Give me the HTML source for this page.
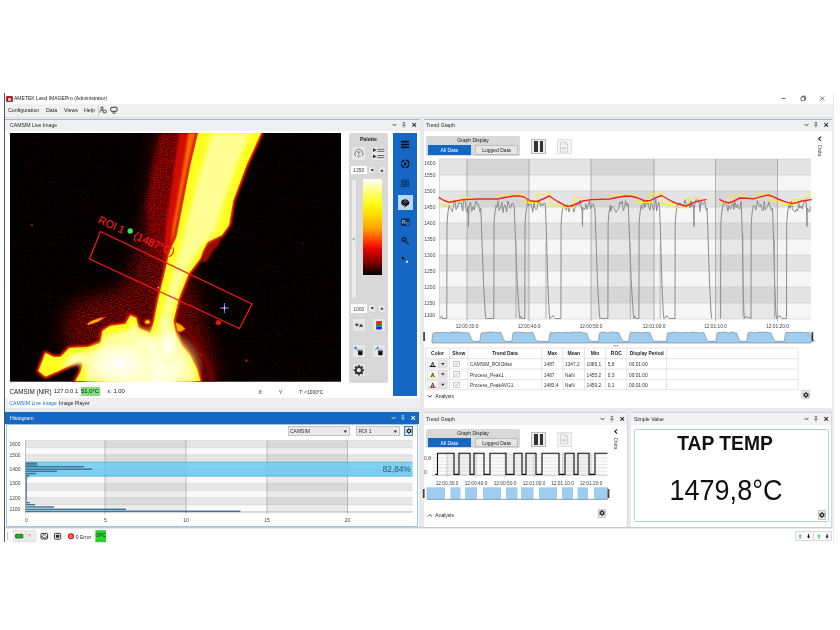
<!DOCTYPE html><html lang="en"><head><meta charset="utf-8"><title>AMETEK Land IMAGEPro (Administrator)</title><style>
html,body{margin:0;padding:0;background:#fff;}
body{width:840px;height:630px;position:relative;overflow:hidden;font-family:"Liberation Sans",sans-serif;}
div,span.t,svg{position:absolute;box-sizing:border-box;}
span.t{white-space:nowrap;}
.btn{background:#e7e7e7;border:0.5px solid #d6d6d6;}
</style></head><body><div id="root" style="left:0;top:0;width:840px;height:630px;will-change:transform;">
<div style="left:4px;top:93px;width:829.5px;height:449.3px;background:#e9e9eb;"></div>
<div style="left:4px;top:93px;width:0.8px;height:449.3px;background:#555;"></div>
<div style="left:4.8px;top:93px;width:828px;height:11px;background:#fff;"></div>
<div style="left:4.8px;top:104px;width:828px;height:12.5px;background:#f0f0f0;"></div>
<div style="left:4.8px;top:116.5px;width:828px;height:1px;background:#dcdcdc;"></div>
<div style="left:6px;top:95.5px;width:6.5px;height:6.5px;background:#a8232b;border-radius:1.2px;"></div>
<div style="left:7.5px;top:98px;width:3.5px;height:2.5px;background:#e9b9bb;border-radius:0.5px;"></div>
<span class="t" style="top:95.34px;font-size:5.6px;line-height:6.72px;color:#222;left:14.3px;transform:scaleX(0.9);transform-origin:left center;">AMETEK Land IMAGEPro (Administrator)</span>
<svg style="left:775px;top:93px;width:58px;height:11px" viewBox="775 93 58 11"><g stroke="#333" stroke-width="0.7" fill="none"><path d="M781.5 98.5h4"/><rect x="801" y="97" width="3.6" height="3.6" rx="0.6"/><path d="M802 97v-0.8h3.6v3.6h-0.9"/><path d="M820.3 96.5l4 4M824.3 96.5l-4 4"/></g></svg>
<span class="t" style="top:106.94px;font-size:5.6px;line-height:6.72px;color:#222;left:8px;transform:scaleX(0.94);transform-origin:left center;">Configuration</span>
<span class="t" style="top:106.94px;font-size:5.6px;line-height:6.72px;color:#222;left:46.2px;transform:scaleX(0.94);transform-origin:left center;">Data</span>
<span class="t" style="top:106.94px;font-size:5.6px;line-height:6.72px;color:#222;left:63.8px;transform:scaleX(0.94);transform-origin:left center;">Views</span>
<span class="t" style="top:106.94px;font-size:5.6px;line-height:6.72px;color:#222;left:83.8px;transform:scaleX(0.94);transform-origin:left center;">Help</span>
<div style="left:98px;top:104.5px;width:0.6px;height:11.5px;background:#d2d2d2;"></div>
<svg style="left:99px;top:105px;width:20px;height:11px" viewBox="99 105 20 11"><g stroke="#222" stroke-width="0.7" fill="none"><circle cx="102" cy="108.2" r="1.3"/><path d="M100 112.5v-1.2q0-1.2 2-1.2q1 0 1.5 0.5"/><rect x="103.2" y="110.2" width="3" height="2.6" rx="0.4"/><rect x="110.8" y="107.3" width="6.2" height="4" rx="0.6" stroke-width="0.9"/><path d="M112.3 113h3.2" stroke-width="0.9"/></g></svg>
<div style="left:5px;top:119px;width:414.5px;height:289px;background:#fff;"></div><div style="left:5px;top:118.5px;width:414.5px;height:1.2px;background:#9db9d6;"></div><div style="left:5px;top:119.7px;width:414.5px;height:11px;background:#f0f0f2;"></div><span class="t" style="top:121.82px;font-size:5.3px;line-height:6.36px;color:#222;left:9.5px;transform:scaleX(0.97);transform-origin:left center;">CAMSIM Live Image</span><svg style="left:389.5px;top:119px;width:30px;height:12px" viewBox="0 0 30 12"><g stroke="#222" fill="none"><path d="M2.6 4.9l1.9 1.9l1.9 -1.9" stroke-width="0.85"/><path d="M12.7 3.4h2.4M13.2 3.4v3M14.6 3.4v3M12.1 6.5h3.6M13.9 6.5v2.3" stroke-width="0.6" opacity="0.7"/><path d="M22.4 4l3.6 3.6M26 4l-3.6 3.6" stroke-width="1.05"/></g></svg>
<div style="left:423.5px;top:119px;width:408.5px;height:289px;background:#fff;"></div><div style="left:423.5px;top:118.5px;width:408.5px;height:1.2px;background:#9db9d6;"></div><div style="left:423.5px;top:119.7px;width:408.5px;height:11px;background:#f0f0f2;"></div><span class="t" style="top:121.82px;font-size:5.3px;line-height:6.36px;color:#222;left:425.7px;transform:scaleX(0.97);transform-origin:left center;">Trend Graph</span><svg style="left:802px;top:119px;width:30px;height:12px" viewBox="0 0 30 12"><g stroke="#222" fill="none"><path d="M2.6 4.9l1.9 1.9l1.9 -1.9" stroke-width="0.85"/><path d="M12.7 3.4h2.4M13.2 3.4v3M14.6 3.4v3M12.1 6.5h3.6M13.9 6.5v2.3" stroke-width="0.6" opacity="0.7"/><path d="M22.4 4l3.6 3.6M26 4l-3.6 3.6" stroke-width="1.05"/></g></svg>
<div style="left:5px;top:412.3px;width:414px;height:115px;background:#fff;"></div><div style="left:5px;top:412.3px;width:414px;height:11.5px;background:#1268c3;"></div><span class="t" style="top:415.12px;font-size:5.3px;line-height:6.36px;color:#fff;left:9.8px;transform:scaleX(0.97);transform-origin:left center;">Histogram</span><svg style="left:389px;top:412.3px;width:30px;height:12px" viewBox="0 0 30 12"><g stroke="#fff" fill="none"><path d="M2.6 4.9l1.9 1.9l1.9 -1.9" stroke-width="0.85"/><path d="M12.7 3.4h2.4M13.2 3.4v3M14.6 3.4v3M12.1 6.5h3.6M13.9 6.5v2.3" stroke-width="0.6" opacity="0.7"/><path d="M22.4 4l3.6 3.6M26 4l-3.6 3.6" stroke-width="1.05"/></g></svg>
<div style="left:423.5px;top:413.3px;width:204px;height:114.2px;background:#fff;"></div><div style="left:423.5px;top:412.3px;width:204px;height:12.5px;background:#f2f2f3;border-top:0.6px solid #d4d4d4;"></div><div style="left:626.9px;top:412.3px;width:0.6px;height:115.2px;background:#d9d9d9;"></div><span class="t" style="top:416.12px;font-size:5.3px;line-height:6.36px;color:#222;left:425.7px;transform:scaleX(0.97);transform-origin:left center;">Trend Graph</span><svg style="left:597.5px;top:413.3px;width:30px;height:12px" viewBox="0 0 30 12"><g stroke="#222" fill="none"><path d="M2.6 4.9l1.9 1.9l1.9 -1.9" stroke-width="0.85"/><path d="M12.7 3.4h2.4M13.2 3.4v3M14.6 3.4v3M12.1 6.5h3.6M13.9 6.5v2.3" stroke-width="0.6" opacity="0.7"/><path d="M22.4 4l3.6 3.6M26 4l-3.6 3.6" stroke-width="1.05"/></g></svg>
<div style="left:631px;top:413.3px;width:201px;height:114.2px;background:#fff;"></div><div style="left:631px;top:412.3px;width:201px;height:12.5px;background:#f2f2f3;border-top:0.6px solid #d4d4d4;"></div><div style="left:831.4px;top:412.3px;width:0.6px;height:115.2px;background:#d9d9d9;"></div><span class="t" style="top:416.12px;font-size:5.3px;line-height:6.36px;color:#222;left:633.6px;transform:scaleX(0.97);transform-origin:left center;">Simple Value</span><svg style="left:802px;top:413.3px;width:30px;height:12px" viewBox="0 0 30 12"><g stroke="#222" fill="none"><path d="M2.6 4.9l1.9 1.9l1.9 -1.9" stroke-width="0.85"/><path d="M12.7 3.4h2.4M13.2 3.4v3M14.6 3.4v3M12.1 6.5h3.6M13.9 6.5v2.3" stroke-width="0.6" opacity="0.7"/><path d="M22.4 4l3.6 3.6M26 4l-3.6 3.6" stroke-width="1.05"/></g></svg>
<div style="left:5px;top:527.3px;width:827px;height:0.8px;background:#c9c9c9;"></div>
<div style="left:4.8px;top:529.3px;width:828.7px;height:13px;background:#fff;"></div>
<svg style="left:9.5px;top:133px;width:331.3px;height:248.7px" viewBox="9.5 133 331.3 248.7" preserveAspectRatio="none"><defs>
<filter id="b1" x="-20%" y="-20%" width="140%" height="140%"><feGaussianBlur stdDeviation="1"/></filter>
<filter id="b2" x="-20%" y="-20%" width="140%" height="140%"><feGaussianBlur stdDeviation="2.2"/></filter>
<filter id="b4" x="-30%" y="-30%" width="160%" height="160%"><feGaussianBlur stdDeviation="5"/></filter>
<filter id="b8" x="-30%" y="-30%" width="160%" height="160%"><feGaussianBlur stdDeviation="9"/></filter>
<filter id="nz" x="-30%" y="-30%" width="160%" height="160%">
 <feTurbulence type="fractalNoise" baseFrequency="0.9" numOctaves="2" seed="3" result="n"/>
 <feColorMatrix in="n" type="matrix" values="0 0 0 0 0  0 0 0 0 0  0 0 0 0 0  2.6 0 0 0 -0.95" result="m"/>
 <feComposite in="SourceGraphic" in2="m" operator="in"/>
</filter>
<filter id="nz3" x="-30%" y="-30%" width="160%" height="160%">
 <feTurbulence type="fractalNoise" baseFrequency="0.85" numOctaves="2" seed="23" result="n"/>
 <feColorMatrix in="n" type="matrix" values="0 0 0 0 0  0 0 0 0 0  0 0 0 0 0  3 0 0 0 -1.2" result="m"/>
 <feComposite in="SourceGraphic" in2="m" operator="in"/>
</filter>
<filter id="hz" x="-40%" y="-20%" width="180%" height="140%">
 <feGaussianBlur in="SourceGraphic" stdDeviation="9" result="b"/>
 <feTurbulence type="fractalNoise" baseFrequency="0.9" numOctaves="2" seed="3" result="n"/>
 <feColorMatrix in="n" type="matrix" values="0 0 0 0 0  0 0 0 0 0  0 0 0 0 0  2.6 0 0 0 -0.95" result="m"/>
 <feComposite in="b" in2="m" operator="in"/>
</filter>
<filter id="hz3" x="-40%" y="-20%" width="180%" height="140%">
 <feGaussianBlur in="SourceGraphic" stdDeviation="2.2" result="b"/>
 <feTurbulence type="fractalNoise" baseFrequency="0.85" numOctaves="2" seed="23" result="n"/>
 <feColorMatrix in="n" type="matrix" values="0 0 0 0 0  0 0 0 0 0  0 0 0 0 0  3 0 0 0 -1.2" result="m"/>
 <feComposite in="b" in2="m" operator="in"/>
</filter>
<filter id="nz2" x="0" y="0" width="100%" height="100%">
 <feTurbulence type="fractalNoise" baseFrequency="0.8" numOctaves="2" seed="11" result="n"/>
 <feColorMatrix in="n" type="matrix" values="0 0 0 0 0  0 0 0 0 0  0 0 0 0 0  3 0 0 0 -1.45" result="m"/>
 <feComposite in="SourceGraphic" in2="m" operator="in"/>
</filter>
<radialGradient id="hot" cx="0.5" cy="0.5" r="0.5"><stop offset="0" stop-color="#fff"/><stop offset="0.55" stop-color="#ffffd0"/><stop offset="1" stop-color="#ffff60" stop-opacity="0"/></radialGradient>
<linearGradient id="halo" x1="0" y1="0" x2="1" y2="0"><stop offset="0" stop-color="#7a0000"/><stop offset="0.55" stop-color="#d81000"/><stop offset="1" stop-color="#ff7a00"/></linearGradient>
</defs><rect x="9.5" y="133" width="331.3" height="248.7" fill="#000"/><rect x="9.5" y="133" width="331.3" height="248.7" fill="#700000" filter="url(#nz2)" opacity="0.3"/><path d="M158 133 L200 133 L180 250 L196 300 L218 381 L100 381 L62 340 L70 305 L125 288 L142 240 L150 190Z" fill="#8a0000" filter="url(#b8)" opacity="0.28"/><path d="M158 133 L200 133 L180 250 L196 300 L218 381 L100 381 L62 340 L70 305 L125 288 L142 240 L150 190Z" fill="#c00000" filter="url(#hz)" opacity="0.9"/><path d="M176 300 L185 318 L200 340 L212 365 L216 381 L196 381 L186 350 L172 325Z" fill="#600000" filter="url(#b2)" opacity="0.8"/><path d="M160 133 L199 133 L190 165 L183 201 L176 237 L169 254 L163 270 L160 262 L150 246 L146 205 L153 165Z" fill="#520000" filter="url(#b2)"/><path d="M160 133 L199 133 L190 165 L183 201 L176 237 L169 254 L163 270 L160 262 L150 246 L146 205 L153 165Z" fill="#b80000" filter="url(#hz3)"/><path d="M179 133 L199 133 L190 165 L183 201 L176 237 L169 254 L164 262 L165 228 L169 200 L174 165Z" fill="#d01000" filter="url(#b1)"/><path d="M188 133 L199 133 L190 165 L183 201 L176 237 L170 252 L172 228 L177 200 L183 165Z" fill="#ff6a00" filter="url(#b1)"/><path d="M221 236 L207 243 L203 252 L202 262 L206 262 L212 252 L219 244Z" fill="#980800" filter="url(#b1)"/><path d="M197.6 133 L260.6 133 L246 165 L232.6 201 L228.5 225 L221.4 235 L207 242 L202.4 251 L200 258 L194 266 L188 274 L178.5 298 L173 321 L175.5 335 L181 345 L189.5 355 L196.5 369 L200 381 L75 381 L80 372 L83 361 L76 362 L60 370 L45 376.5 L38 371 L45 353 L53 357 L60 357 L69 348 L88 347 L100 343 L102 331 L109.5 326 L125 324 L129.8 315.5 L135.7 318 L138 328 L150 333 L153.5 321 L158 298 L164 274 L169 252 L176 237 L183 201 L190 165Z" fill="#e01000" stroke="#b00000" stroke-width="5" stroke-linejoin="round" filter="url(#b1)"/><path d="M197.6 133 L260.6 133 L246 165 L232.6 201 L228.5 225 L221.4 235 L207 242 L202.4 251 L200 258 L194 266 L188 274 L178.5 298 L173 321 L175.5 335 L181 345 L189.5 355 L196.5 369 L200 381 L75 381 L80 372 L83 361 L76 362 L60 370 L45 376.5 L38 371 L45 353 L53 357 L60 357 L69 348 L88 347 L100 343 L102 331 L109.5 326 L125 324 L129.8 315.5 L135.7 318 L138 328 L150 333 L153.5 321 L158 298 L164 274 L169 252 L176 237 L183 201 L190 165Z" fill="#ff9000" stroke="#ff5000" stroke-width="2" stroke-linejoin="round" filter="url(#b1)"/><path d="M197.6 133 L260.6 133 L246 165 L232.6 201 L228.5 225 L221.4 235 L207 242 L202.4 251 L200 258 L194 266 L188 274 L178.5 298 L173 321 L175.5 335 L181 345 L189.5 355 L196.5 369 L200 381 L75 381 L80 372 L83 361 L76 362 L60 370 L45 376.5 L38 371 L45 353 L53 357 L60 357 L69 348 L88 347 L100 343 L102 331 L109.5 326 L125 324 L129.8 315.5 L135.7 318 L138 328 L150 333 L153.5 321 L158 298 L164 274 L169 252 L176 237 L183 201 L190 165Z" fill="#ffff20"/><path d="M212 133 L250 133 L236 165 L224 201 L214 232 L198 250 L186 270 L176 298 L168 322 L160 322 L166 296 L174 268 L182 240 L192 201 L202 165Z" fill="#ffffa0" filter="url(#b2)" opacity="0.9"/><path d="M60 366 L72 354 L96 352 L106 336 L128 331 L134 324 L142 334 L156 338 L160 318 L170 318 L174 338 L184 352 L192 368 L195 381 L84 381 L88 366 L80 364Z" fill="#ffffb0" filter="url(#b2)"/><ellipse cx="146" cy="366" rx="58" ry="42" fill="url(#hot)"/><ellipse cx="118" cy="364" rx="42" ry="28" fill="url(#hot)" opacity="0.9"/><ellipse cx="168" cy="345" rx="14" ry="22" fill="url(#hot)" opacity="0.8"/><path d="M86 324 Q94 318 105 317 Q98 323 88 325Z" fill="#ffc000" stroke="#d02000" stroke-width="1"/><ellipse cx="147" cy="322" rx="3.2" ry="2.6" fill="#ffe000" stroke="#c01000" stroke-width="1.6"/><path d="M175 322 L181 325 L185 329 L180 332 L176 331Z" fill="#ffb000" stroke="#e03000" stroke-width="1"/><circle cx="218" cy="322.5" r="2.6" fill="#e81800"/><circle cx="157.6" cy="287.5" r="1" fill="#ff9000"/><circle cx="31.5" cy="225" r="0.9" fill="#e01000"/><circle cx="246" cy="360.5" r="1.2" fill="#c01000"/><circle cx="201" cy="355" r="1.3" fill="#b01000"/><circle cx="303" cy="243" r="0.7" fill="#900000"/><path d="M187 332 Q204 350 213 381" fill="none" stroke="#a00000" stroke-width="1.6" filter="url(#b1)" opacity="0.8"/><path d="M100 231.5 L251.5 304 L239 328.5 L89 259Z" fill="none" stroke="#ff1616" stroke-width="1.25"/><g transform="translate(97.2 222.6) rotate(24)" font-family="Liberation Sans, sans-serif" font-size="10.6" fill="#ff1a1a" stroke="#ff1a1a" stroke-width="0.25"><text x="0" y="0">ROI 1</text><text x="38.6" y="0" font-size="10.9">(1487°C)</text></g><circle cx="129.7" cy="231" r="2.7" fill="#3fe060"/><path d="M163 257v14" stroke="#e06080" stroke-width="0.5" stroke-dasharray="1 1" opacity="0.7"/><path d="M219.5 308h9M224 303v10" stroke="#5f7cf0" stroke-width="1.1"/><path d="M222 308h4M224 306v4" stroke="#d8e0ff" stroke-width="0.6"/></svg>
<div style="left:348.6px;top:133.3px;width:39.8px;height:250px;background:#d8d8d8;border-radius:2px;"></div>
<span class="t" style="top:135.68px;font-size:5.2px;line-height:6.24px;color:#222;font-weight:700;left:368.4px;transform:translateX(-50%);transform-origin:center center;">Palette</span>
<div class="btn" style="left:351.4px;top:145.9px;width:14.8px;height:14.7px;"></div>
<div class="btn" style="left:371.4px;top:145.9px;width:14.9px;height:14.7px;"></div>
<svg style="left:351px;top:146px;width:36px;height:15px" viewBox="351 146 36 15"><g stroke="#505050" stroke-width="0.75" fill="none"><path d="M356.2 155.6a1.9 1.9 0 0 1 -0.2-3.7a2.1 2.1 0 0 1 1.6-2.2a2.3 2.3 0 0 1 3.2 0.3a2.1 2.1 0 0 1 1.4 2.2a1.8 1.8 0 0 1 -0.6 3.4"/><path d="M358.8 151.2v4.6M357.3 153l1.5-1.5l1.5 1.5" stroke-width="0.55"/><path d="M357 156.4q1.8 0.8 3.6 0" stroke-width="0.5"/></g><g fill="#333"><path d="M373 148.3l3.8 1.8l-3.8 1.8zM373 154.6l3.8 1.8l-3.8 1.8z"/></g><g fill="#555"><rect x="377.4" y="148.75" width="6.9" height="0.9"/><rect x="377.4" y="150.85" width="6.9" height="0.9"/><rect x="377.4" y="155.15" width="6.9" height="0.9"/><rect x="377.4" y="157.25" width="6.9" height="0.9"/></g></svg>
<div style="left:350.7px;top:165.7px;width:16.4px;height:8.6px;background:#fff;"></div><span class="t" style="top:167.2px;font-size:5px;line-height:6px;color:#444;left:353.2px;">1350</span><div class="btn" style="left:368.3px;top:165.7px;width:7.8px;height:8.6px;"></div><div class="btn" style="left:377.9px;top:165.7px;width:8.1px;height:8.6px;"></div><svg style="left:368px;top:165.7px;width:18px;height:9px" viewBox="0 0 18 9"><path d="M2.6 3.2h3.4l-1.7 2.4zM12.3 5.6h3.4l-1.7-2.4z" fill="#222"/></svg>
<div style="left:351px;top:179px;width:6.4px;height:119.6px;background:#ebebeb;border:0.5px solid #d4d4d4;"></div>
<span class="t" style="top:236.54px;font-size:4.6px;line-height:5.52px;color:#444;left:352.4px;">&lt;</span>
<div style="left:362.6px;top:179px;width:19.5px;height:95.8px;background:linear-gradient(to bottom,#ffffff 0%,#ffffa0 9%,#ffff20 24%,#ffe000 36%,#ffa000 52%,#ff3000 66%,#e00000 74%,#800000 87%,#200000 96%,#000000 100%);"></div>
<div style="left:350.7px;top:304.2px;width:16.4px;height:8.6px;background:#fff;"></div><span class="t" style="top:305.7px;font-size:5px;line-height:6px;color:#444;left:353.2px;">1000</span><div class="btn" style="left:368.3px;top:304.2px;width:7.8px;height:8.6px;"></div><div class="btn" style="left:377.9px;top:304.2px;width:8.1px;height:8.6px;"></div><svg style="left:368px;top:304.2px;width:18px;height:9px" viewBox="0 0 18 9"><path d="M2.6 3.2h3.4l-1.7 2.4zM12.3 5.6h3.4l-1.7-2.4z" fill="#222"/></svg>
<div class="btn" style="left:351.9px;top:317.8px;width:14.3px;height:14.4px;"></div>
<div class="btn" style="left:371.8px;top:317.8px;width:14.3px;height:14.4px;"></div>
<div class="btn" style="left:351.9px;top:343.7px;width:14.3px;height:14.4px;"></div>
<div class="btn" style="left:371.8px;top:343.7px;width:14.3px;height:14.4px;"></div>
<div class="btn" style="left:351.9px;top:362.8px;width:14.3px;height:14.4px;"></div>
<svg style="left:351px;top:317px;width:36px;height:62px" viewBox="351 317 36 62"><path d="M354.8 323.8h4.1l-2.05 2.9zM358.9 326.7h4.3l-2.15-2.9z" fill="#333"/><rect x="375.6" y="320.6" width="6.8" height="9.4" fill="#fbfbe8"/><rect x="376.1" y="321.1" width="5.8" height="2.8" fill="#f01818"/><rect x="376.1" y="323.9" width="5.8" height="2.8" fill="#189018"/><rect x="376.1" y="326.7" width="5.8" height="2.8" fill="#1a28f0"/><g fill="#111"><path d="M358.1 350.6h4.4v3.6q0 1-1 1h-2.4q-1 0-1-1z"/><path d="M378.2 350.6h4.4v3.6q0 1-1 1h-2.4q-1 0-1-1z"/></g><ellipse cx="360.3" cy="350.5" rx="2" ry="0.8" fill="#ccc" stroke="#111" stroke-width="0.4"/><ellipse cx="380.4" cy="350.5" rx="2" ry="0.8" fill="#ccc" stroke="#111" stroke-width="0.4"/><g stroke="#1a62c8" stroke-width="0.9" fill="none"><path d="M355 347.6l3.2 3M354.8 349.4v-2h2.2"/><path d="M375.4 350.2q0.3-2.2 2.8-2.4M377 346.6l1.5 1.2l-1.3 1.4"/></g><g transform="translate(358.9 370.2)"><circle r="3" fill="none" stroke="#333" stroke-width="1.8"/><g stroke="#333" stroke-width="1.9"><path d="M0-5.2v1.6M0 5.2v-1.6M-5.2 0h1.6M5.2 0h-1.6M-3.7-3.7l1.15 1.15M3.7 3.7l-1.15-1.15M-3.7 3.7l1.15-1.15M3.7-3.7l-1.15 1.15"/></g></g></svg>
<div style="left:393.2px;top:133px;width:24px;height:262.5px;background:#1467c2;"></div>
<div style="left:398px;top:195.4px;width:14.8px;height:14.3px;background:#b7d7f2;"></div>
<svg style="left:393px;top:133px;width:24px;height:140px" viewBox="393 133 24 140"><g fill="#0a0a14"><rect x="401.1" y="140.8" width="8" height="1.6"/><rect x="401.1" y="143.7" width="8" height="1.6"/><rect x="401.1" y="146.5" width="8" height="1.6"/></g><circle cx="405.2" cy="163.8" r="3.8" fill="none" stroke="#0a0a14" stroke-width="1.2" stroke-dasharray="4.6 1.37" stroke-dashoffset="-0.7"/><path d="M404 161.7l3.2 2.1l-3.2 2.1z" fill="#0a0a14"/><g stroke="#0c3566" stroke-width="0.9" fill="none"><rect x="401.6" y="180.1" width="7" height="6.4"/><path d="M401.6 182.2h7M401.6 184.3h7M403.9 180.1v6.4M406.2 180.1v6.4"/></g><path d="M401.4 203.6a3.9 3.4 0 1 1 5 2.3q-0.8-1.3-2.2-0.6q-2 0.8-2.8-1.7z" fill="#111"/><path d="M404.6 206.6l4.6-5" stroke="#111" stroke-width="1.1"/><path d="M404 207.3l1.6-0.4l-1-1z" fill="#111"/><path d="M403 202.6l4-3.4" stroke="#b7d7f2" stroke-width="0.6"/><path d="M404.6 203.6l3.6-3" stroke="#b7d7f2" stroke-width="0.5"/><rect x="401" y="218.5" width="8.5" height="7.3" fill="#0c2f5c"/><path d="M402.6 224v-3.6h1.6q1 0 1 0.9q0 0.9-1 0.9h-1.6M404.2 222.2l1.2 1.8" stroke="#cfe0f4" stroke-width="0.6" fill="none"/><rect x="406.4" y="222.4" width="2" height="2" fill="#cfe0f4"/><circle cx="407.6" cy="223.4" r="0.7" fill="#0c2f5c"/><circle cx="404.1" cy="239.6" r="2.3" fill="#0c2f5c" stroke="#0c2f5c" stroke-width="1"/><path d="M402.9 239.6h2.4" stroke="#3f78c0" stroke-width="0.6"/><path d="M405.8 241.4l3 3" stroke="#0c2f5c" stroke-width="1.4"/><path d="M401.2 258l1.6-1.6l1.6 1.6l-1.6 1.6z" fill="#0a0a14"/><path d="M404 259.4l1.6 1.4" stroke="#0a0a14" stroke-width="0.6"/><rect x="405.9" y="260.7" width="2" height="2" fill="#f4ead8"/></svg>
<span class="t" style="top:387.62px;font-size:6.3px;line-height:7.56px;color:#222;left:9.5px;">CAMSIM (NIR)</span>
<span class="t" style="top:387.86px;font-size:5.9px;line-height:7.08px;color:#222;left:53.7px;">127.0.0.1</span>
<div style="left:80.5px;top:387px;width:19px;height:9.3px;background:#7ee07e;"></div>
<span class="t" style="top:387.86px;font-size:5.9px;line-height:7.08px;color:#111;left:81px;">51,0°C</span>
<span class="t" style="top:387.86px;font-size:5.9px;line-height:7.08px;color:#222;left:107.5px;">ε: 1.00</span>
<span class="t" style="top:389.62px;font-size:4.8px;line-height:5.76px;color:#222;left:258.5px;">X:</span>
<span class="t" style="top:389.62px;font-size:4.8px;line-height:5.76px;color:#222;left:278.7px;">Y:</span>
<span class="t" style="top:389.62px;font-size:4.8px;line-height:5.76px;color:#222;left:299.3px;">T: &lt;1000°C</span>
<div style="left:5px;top:397.5px;width:414.5px;height:10.5px;background:#eeeef2;"></div>
<div style="left:7.5px;top:397.5px;width:50px;height:10.5px;background:#fff;"></div>
<span class="t" style="top:400.08px;font-size:5.2px;line-height:6.24px;color:#1a6fc4;left:9.3px;">CAMSIM Live Image</span>
<span class="t" style="top:400.08px;font-size:5.2px;line-height:6.24px;color:#222;left:59px;">Image Player</span>
<div style="left:6.3px;top:423.8px;width:411.7px;height:102.9px;background:#fff;border:0.9px solid #9cc7ea;"></div>
<div style="left:287.5px;top:426.3px;width:62.5px;height:9.6px;background:#e9e9e9;border:0.5px solid #c6c6c6;"></div><span class="t" style="top:428.3px;font-size:5px;line-height:6px;color:#333;left:290px;">CAMSIM</span><svg style="left:342.5px;top:429.5px;width:5px;height:4px" viewBox="0 0 5 4"><path d="M0.6 0.6h3.4l-1.7 2.3z" fill="#333"/></svg>
<div style="left:356px;top:426.3px;width:44px;height:9.6px;background:#e9e9e9;border:0.5px solid #c6c6c6;"></div><span class="t" style="top:428.3px;font-size:5px;line-height:6px;color:#333;left:358.5px;">ROI 1</span><svg style="left:392.5px;top:429.5px;width:5px;height:4px" viewBox="0 0 5 4"><path d="M0.6 0.6h3.4l-1.7 2.3z" fill="#333"/></svg>
<div style="left:404.1px;top:426.1px;width:9.2px;height:10px;background:#f4f8fc;border:0.9px solid #3a80d0;box-shadow:inset 0 0 0 0.6px #b0d0f0;"></div>
<svg style="left:403.7px;top:426.1px;width:10px;height:10px" viewBox="-5 -5 10 10"><path d="M0.82 1.83 L0.73 2.86 L-0.73 2.86 L-0.82 1.83 L-1.17 1.62 L-2.11 2.06 L-2.84 0.80 L-1.99 0.21 L-1.99 -0.21 L-2.84 -0.80 L-2.11 -2.06 L-1.17 -1.62 L-0.82 -1.83 L-0.73 -2.86 L0.73 -2.86 L0.82 -1.83 L1.17 -1.62 L2.11 -2.06 L2.84 -0.80 L1.99 -0.21 L1.99 0.21 L2.84 0.80 L2.11 2.06 L1.17 1.62Z M0.95 0 A0.95 0.95 0 1 0 -0.95 0 A0.95 0.95 0 1 0 0.95 0Z" fill="#2a2622" fill-rule="evenodd"/></svg>
<svg style="left:0;top:436px;width:420px;height:90px" viewBox="0 436 420 90"><rect x="25.5" y="440.5" width="387.0" height="71.5" fill="#fafafa"/><rect x="25.5" y="440.5" width="387.0" height="7.15" fill="#e6e6e6"/><path d="M25.5 440.5H412.5" stroke="#cfcfcf" stroke-width="0.5"/><path d="M25.5 447.65H412.5" stroke="#cfcfcf" stroke-width="0.5"/><rect x="25.5" y="454.8" width="387.0" height="7.15" fill="#e6e6e6"/><path d="M25.5 454.8H412.5" stroke="#cfcfcf" stroke-width="0.5"/><path d="M25.5 461.95H412.5" stroke="#cfcfcf" stroke-width="0.5"/><rect x="25.5" y="469.1" width="387.0" height="7.15" fill="#e6e6e6"/><path d="M25.5 469.1H412.5" stroke="#cfcfcf" stroke-width="0.5"/><path d="M25.5 476.25H412.5" stroke="#cfcfcf" stroke-width="0.5"/><rect x="25.5" y="483.4" width="387.0" height="7.15" fill="#e6e6e6"/><path d="M25.5 483.4H412.5" stroke="#cfcfcf" stroke-width="0.5"/><path d="M25.5 490.55H412.5" stroke="#cfcfcf" stroke-width="0.5"/><rect x="25.5" y="497.7" width="387.0" height="7.15" fill="#e6e6e6"/><path d="M25.5 497.7H412.5" stroke="#cfcfcf" stroke-width="0.5"/><path d="M25.5 504.85H412.5" stroke="#cfcfcf" stroke-width="0.5"/><rect x="105" y="440.5" width="81" height="71.5" fill="#000" opacity="0.05"/><rect x="267" y="440.5" width="80.5" height="71.5" fill="#000" opacity="0.06"/><path d="M25.5 440.5V514" stroke="#9a9a9a" stroke-width="0.6"/><path d="M105 440.5V514" stroke="#9a9a9a" stroke-width="0.6"/><path d="M186 440.5V514" stroke="#9a9a9a" stroke-width="0.6"/><path d="M267 440.5V514" stroke="#9a9a9a" stroke-width="0.6"/><path d="M347.5 440.5V514" stroke="#9a9a9a" stroke-width="0.6"/><path d="M25.5 512H412.5" stroke="#9a9a9a" stroke-width="0.7"/><rect x="25.5" y="462" width="387.0" height="14.3" fill="#62c8f2" opacity="0.8"/><path d="M25.5 462.2H412.5M25.5 476.1H412.5" stroke="#4ab0dc" stroke-width="0.6"/><rect x="25.5" y="462.45" width="11.5" height="1.5" fill="#3f7896"/><rect x="25.5" y="464.25" width="12" height="1.5" fill="#3f7896"/><rect x="25.5" y="465.95" width="58.5" height="1.5" fill="#3f7896"/><rect x="25.5" y="468.45" width="66.5" height="1.5" fill="#3f7896"/><rect x="25.5" y="470.55" width="31.5" height="1.5" fill="#3f7896"/><rect x="25.5" y="472.85" width="10.5" height="1.5" fill="#3f7896"/><rect x="25.5" y="474.95" width="4" height="1.5" fill="#3f7896"/><rect x="25.5" y="477.05" width="2" height="1.5" fill="#3f7896"/><rect x="25.5" y="501.85" width="4" height="1.5" fill="#3f7896"/><rect x="25.5" y="503.95" width="9.5" height="1.5" fill="#3f7896"/><rect x="25.5" y="506.25" width="28.5" height="1.5" fill="#3f7896"/><rect x="25.5" y="508.55" width="100.5" height="1.5" fill="#3f7896"/><rect x="25.5" y="510.55" width="215" height="1.5" fill="#3f7896"/><path d="M26.3 478 V501" stroke="#3f7896" stroke-width="1.1"/></svg>
<span class="t" style="top:441px;font-size:5px;line-height:6px;color:#444;left:9.5px;">1600</span>
<span class="t" style="top:451.5px;font-size:5px;line-height:6px;color:#444;left:9.5px;">1500</span>
<span class="t" style="top:466px;font-size:5px;line-height:6px;color:#444;left:9.5px;">1400</span>
<span class="t" style="top:480px;font-size:5px;line-height:6px;color:#444;left:9.5px;">1300</span>
<span class="t" style="top:494.5px;font-size:5px;line-height:6px;color:#444;left:9.5px;">1200</span>
<span class="t" style="top:506px;font-size:5px;line-height:6px;color:#444;left:9.5px;">1100</span>
<span class="t" style="top:517.3px;font-size:5px;line-height:6px;color:#444;left:26.5px;transform:translateX(-50%);transform-origin:center center;">0</span>
<span class="t" style="top:517.3px;font-size:5px;line-height:6px;color:#444;left:105.5px;transform:translateX(-50%);transform-origin:center center;">5</span>
<span class="t" style="top:517.3px;font-size:5px;line-height:6px;color:#444;left:186px;transform:translateX(-50%);transform-origin:center center;">10</span>
<span class="t" style="top:517.3px;font-size:5px;line-height:6px;color:#444;left:267px;transform:translateX(-50%);transform-origin:center center;">15</span>
<span class="t" style="top:517.3px;font-size:5px;line-height:6px;color:#444;left:347.5px;transform:translateX(-50%);transform-origin:center center;">20</span>
<span class="t" style="top:463.62px;font-size:9.3px;line-height:11.16px;color:#27566e;right:429px;transform:scaleX(0.88);transform-origin:right center;">82,84%</span>
<div style="left:426px;top:136px;width:94px;height:19.5px;background:#d9d9d9;border-radius:1.5px;"></div><span class="t" style="top:137.3px;font-size:5px;line-height:6px;color:#222;left:473px;transform:translateX(-50%);transform-origin:center center;">Graph Display</span><div style="left:427.5px;top:145px;width:43.5px;height:9.5px;background:#1467c2;"></div><span class="t" style="top:146.9px;font-size:5px;line-height:6px;color:#fff;left:449.3px;transform:translateX(-50%);transform-origin:center center;">All Data</span><div style="left:475px;top:145px;width:43px;height:9.5px;background:#e6e6e6;border:0.5px solid #bdbdbd;"></div><span class="t" style="top:146.9px;font-size:5px;line-height:6px;color:#222;left:496.5px;transform:translateX(-50%);transform-origin:center center;">Logged Data</span><div style="left:531px;top:139px;width:15px;height:15px;background:#ededed;border:0.7px solid #bdbdbd;"></div><div style="left:534px;top:141px;width:3.5px;height:11px;background:#333;"></div><div style="left:539.6px;top:141px;width:3.5px;height:11px;background:#333;"></div><div style="left:557px;top:139px;width:14.5px;height:15px;background:#f4f4f4;border:0.5px solid #e0e0e0;"></div><svg style="left:559px;top:140.5px;width:10px;height:12px" viewBox="0 0 10 12"><path d="M1.5 1h4.6l2.4 2.4v7.6h-7z M6.1 1v2.4h2.4" fill="none" stroke="#c9c9c9" stroke-width="0.7"/><rect x="2.6" y="6" width="4.8" height="2.6" fill="#d6d6d6"/></svg>
<div style="left:426px;top:428.7px;width:94px;height:19.5px;background:#d9d9d9;border-radius:1.5px;"></div><span class="t" style="top:430px;font-size:5px;line-height:6px;color:#222;left:473px;transform:translateX(-50%);transform-origin:center center;">Graph Display</span><div style="left:427.5px;top:437.7px;width:43.5px;height:9.5px;background:#1467c2;"></div><span class="t" style="top:439.6px;font-size:5px;line-height:6px;color:#fff;left:449.3px;transform:translateX(-50%);transform-origin:center center;">All Data</span><div style="left:475px;top:437.7px;width:43px;height:9.5px;background:#e6e6e6;border:0.5px solid #bdbdbd;"></div><span class="t" style="top:439.6px;font-size:5px;line-height:6px;color:#222;left:496.5px;transform:translateX(-50%);transform-origin:center center;">Logged Data</span><div style="left:531px;top:431.7px;width:15px;height:15px;background:#ededed;border:0.7px solid #bdbdbd;"></div><div style="left:534px;top:433.7px;width:3.5px;height:11px;background:#333;"></div><div style="left:539.6px;top:433.7px;width:3.5px;height:11px;background:#333;"></div><div style="left:557px;top:431.7px;width:14.5px;height:15px;background:#f4f4f4;border:0.5px solid #e0e0e0;"></div><svg style="left:559px;top:433.2px;width:10px;height:12px" viewBox="0 0 10 12"><path d="M1.5 1h4.6l2.4 2.4v7.6h-7z M6.1 1v2.4h2.4" fill="none" stroke="#c9c9c9" stroke-width="0.7"/><rect x="2.6" y="6" width="4.8" height="2.6" fill="#d6d6d6"/></svg>
<svg style="left:420px;top:155px;width:420px;height:195px" viewBox="420 155 420 195"><rect x="439.5" y="159" width="371.5" height="160" fill="#f6f6f6"/><rect x="439.5" y="159" width="371.5" height="16" fill="#e4e4e4"/><rect x="439.5" y="191" width="371.5" height="16" fill="#e4e4e4"/><rect x="439.5" y="223" width="371.5" height="16" fill="#e4e4e4"/><rect x="439.5" y="255" width="371.5" height="16" fill="#e4e4e4"/><rect x="439.5" y="287" width="371.5" height="16" fill="#e4e4e4"/><rect x="467" y="159" width="62" height="160" fill="#000" opacity="0.06"/><rect x="591" y="159" width="63" height="160" fill="#000" opacity="0.06"/><rect x="715.5" y="159" width="62.0" height="160" fill="#000" opacity="0.06"/><path d="M439.5 159H811" stroke="#c0c0c0" stroke-width="0.5"/><path d="M439.5 175H811" stroke="#c0c0c0" stroke-width="0.5"/><path d="M439.5 191H811" stroke="#c0c0c0" stroke-width="0.5"/><path d="M439.5 207H811" stroke="#c0c0c0" stroke-width="0.5"/><path d="M439.5 223H811" stroke="#c0c0c0" stroke-width="0.5"/><path d="M439.5 239H811" stroke="#c0c0c0" stroke-width="0.5"/><path d="M439.5 255H811" stroke="#c0c0c0" stroke-width="0.5"/><path d="M439.5 271H811" stroke="#c0c0c0" stroke-width="0.5"/><path d="M439.5 287H811" stroke="#c0c0c0" stroke-width="0.5"/><path d="M439.5 303H811" stroke="#c0c0c0" stroke-width="0.5"/><path d="M439.5 319H811" stroke="#c0c0c0" stroke-width="0.5"/><path d="M467 159V321" stroke="#8c8c8c" stroke-width="0.6"/><path d="M529 159V321" stroke="#8c8c8c" stroke-width="0.6"/><path d="M591 159V321" stroke="#8c8c8c" stroke-width="0.6"/><path d="M654 159V321" stroke="#8c8c8c" stroke-width="0.6"/><path d="M715.5 159V321" stroke="#8c8c8c" stroke-width="0.6"/><path d="M777.5 159V321" stroke="#8c8c8c" stroke-width="0.6"/><path d="M439.5 159V319" stroke="#b4b4b4" stroke-width="0.5"/><polyline points="439.8,318.5 441.0,316.5 441.8,316.0 442.6,318.5 446.8,318.5 447.0,223.0 448.0,212.0 449.2,205.0 449.8,207.8 451.3,209.2 452.4,211.8 453.4,205.9 454.7,200.2 456.1,209.6 457.1,207.7 458.5,202.6 459.9,203.6 461.2,202.6 462.7,211.2 463.7,199.5 465.0,200.0 466.1,210.2 467.3,212.6 467.9,207.0 468.2,209.4 468.4,226.5 469.0,208.0 469.5,204.6 470.5,202.3 471.8,211.6 472.9,206.6 474.3,210.0 475.8,201.1 477.2,204.2 478.3,204.0 479.3,208.6 480.2,212.3 480.8,208.0 481.6,230.0 483.6,285.0 485.2,313.0 485.8,318.5 486.3,318.5 493.8,318.5 493.8,318.5 494.0,223.0 495.0,212.0 496.2,205.0 496.8,207.4 498.0,200.7 499.1,210.5 500.6,207.9 501.8,201.9 503.0,212.5 504.1,206.1 505.2,205.0 506.7,212.0 507.8,201.1 509.2,204.5 510.5,208.3 511.9,203.5 513.2,203.7 514.3,208.0 515.1,230.0 517.3,285.0 519.2,313.0 519.8,318.5 520.8,316.0 521.8,318.5 524.8,318.5 524.8,318.5 525.0,223.0 526.0,212.0 527.2,205.0 527.3,200.1 528.6,205.8 530.0,204.3 531.4,204.4 532.7,212.2 533.9,202.1 535.1,208.6 536.1,209.8 537.3,207.8 538.6,200.3 539.9,202.7 540.8,205.9 541.8,204.0 542.7,205.8 544.0,203.0 545.1,203.5 545.5,208.0 546.3,230.0 547.9,285.0 549.2,313.0 549.8,318.5 551.3,317.5 552.8,315.5 554.3,317.5 555.3,318.5 560.9,318.5 561.1,223.0 562.1,212.0 563.3,205.0 563.9,205.2 564.9,206.8 566.3,210.2 567.6,204.6 568.9,212.0 570.0,207.1 571.2,207.7 572.6,204.7 573.7,212.2 575.2,207.4 576.4,205.2 577.6,203.6 578.8,205.5 580.2,200.2 581.7,209.8 582.0,207.0 582.5,226.5 582.7,212.4 583.1,208.0 583.9,208.1 584.8,209.5 585.9,203.7 587.1,209.3 588.1,205.7 589.3,200.2 590.6,208.9 592.0,204.8 593.0,203.7 594.4,208.7 594.9,208.0 595.7,230.0 597.6,285.0 599.3,313.0 599.9,318.5 600.4,318.5 607.9,318.5 607.9,318.5 608.1,223.0 609.1,212.0 610.3,205.0 610.9,211.4 612.1,206.2 613.4,207.2 614.8,209.9 616.1,212.2 617.0,210.5 618.5,208.9 620.0,201.9 621.0,203.8 622.1,201.1 623.4,211.0 624.5,207.5 625.6,200.7 626.9,206.3 628.2,203.3 628.4,208.0 629.2,230.0 631.4,285.0 633.3,313.0 633.9,318.5 634.9,316.0 635.9,318.5 638.9,318.5 638.9,318.5 639.1,223.0 640.1,212.0 641.3,205.0 641.4,206.5 642.5,209.2 643.8,201.1 644.8,207.4 646.0,204.0 647.3,200.7 648.6,206.5 649.9,210.3 651.0,202.9 652.1,204.8 653.4,210.1 654.6,207.4 655.8,198.0 656.7,211.1 657.6,205.9 658.8,202.2 659.6,208.0 660.4,230.0 662.0,285.0 663.3,313.0 663.9,318.5 665.4,317.5 666.9,315.5 668.4,317.5 669.4,318.5 675.0,318.5 675.0,318.5 675.2,223.0 676.2,212.0 677.4,205.0 678.0,204.7 679.0,203.2 680.1,202.9 681.5,204.6 682.8,205.9 684.1,203.6 685.1,199.6 686.1,205.0 687.2,205.9 688.5,202.0 690.0,208.1 690.9,200.8 691.8,206.9 692.9,204.3 693.5,207.0 694.0,226.5 694.1,208.9 694.6,208.0 695.0,202.3 696.2,199.2 697.6,202.2 698.9,201.1 700.1,211.5 701.1,200.2 702.4,204.7 703.8,203.8 704.8,201.4 706.2,210.2 707.0,208.0 707.8,230.0 709.6,285.0 711.1,313.0 711.7,318.5" fill="none" stroke="#8c8c8c" stroke-width="1" stroke-linejoin="round"/><polyline points="720.4,318.5 720.6,318.5 720.8,223.0 721.8,212.0 723.0,205.0 723.5,201.9 724.7,204.4 725.7,202.5 726.6,205.3 727.9,211.2 729.1,205.5 730.6,209.1 732.0,204.8 733.0,203.3 733.9,209.5 734.8,201.6 736.3,207.7 737.4,204.4 738.8,208.9 739.8,208.9 741.2,201.5 741.4,208.0 742.2,230.0 743.1,285.0 743.9,313.0 744.5,318.5 746.0,316.5 751.0,318.5 751.0,318.5 751.2,223.0 752.2,212.0 753.4,205.0 753.5,205.4 755.0,206.7 755.9,210.2 757.4,200.4 758.8,204.9 759.9,207.0 760.9,204.4 762.3,210.6 763.3,210.4 764.3,201.2 765.3,210.0 766.7,207.8 767.6,206.4 768.8,201.8 769.9,206.0 771.4,210.2 772.5,208.0 773.3,230.0 774.7,285.0 775.9,313.0 776.5,318.5 778.0,317.5 779.5,315.5 781.0,317.5 782.0,318.5 786.5,318.5 786.5,318.5 786.7,223.0 787.7,212.0 788.9,205.0 789.0,206.7 790.3,208.5 791.2,201.1 792.6,208.9 793.6,210.7 794.9,212.0 796.3,209.2 797.5,211.2 798.8,203.4 799.8,208.2 801.0,206.0 802.3,208.9 803.3,203.8 804.7,202.1 805.8,200.8 806.5,207.0 807.0,226.5 807.2,209.1 807.6,208.0 808.4,211.3 809.7,212.1 810.6,207.0" fill="none" stroke="#8c8c8c" stroke-width="1" stroke-linejoin="round"/><path d="M516 318.5V241.1" stroke="#9a9a9a" stroke-width="0.7"/><path d="M546 318.5V241.8" stroke="#9a9a9a" stroke-width="0.7"/><path d="M630.3 318.5V242.3" stroke="#9a9a9a" stroke-width="0.7"/><path d="M660.2 318.5V242.7" stroke="#9a9a9a" stroke-width="0.7"/><path d="M743 318.5V234.7" stroke="#9a9a9a" stroke-width="0.7"/><path d="M774.5 318.5V239.8" stroke="#9a9a9a" stroke-width="0.7"/><path d="M439.5 205H450V201H463V197.7H470V199.3H499.5V195H524V202.3H537.4V194H550V205H563V207.7H574.4V197.7H588V199.6H611.4V195H637V202.3H649V194H662V204.5H675V207.7H688V197.7H699.5V199.6H707V199.6" fill="none" stroke="#f8f410" stroke-width="1.2"/><path d="M719.8 203H731.4V195H743V198H757V194H770V201H782V204.5H793V199.6H805V197.7H811V197.7" fill="none" stroke="#f8f410" stroke-width="1.2"/><polyline points="439.2,197.7 444.0,200.5 449.5,202.3 456.0,201.0 463.0,199.6 479.0,199.0 498.0,199.0 506.0,197.3 514.0,196.0 519.0,196.0 524.0,197.0 530.6,201.0 537.0,201.5 543.0,199.0 549.5,196.0 553.0,198.5 557.6,201.5 562.0,203.7 566.8,206.4 570.0,206.0 573.6,205.0 578.0,203.0 583.0,201.0 591.0,199.6 610.0,199.0 618.0,197.3 626.0,196.0 631.0,196.3 637.0,197.7 645.0,201.0 650.6,200.4 656.0,197.6 661.4,195.5 666.0,198.0 672.0,201.5 679.0,204.3 686.0,206.2 690.0,204.3 694.0,202.3 700.0,200.6 706.0,199.6" fill="none" stroke="#f0202c" stroke-width="1.4" stroke-linejoin="round" stroke-linecap="round"/><polyline points="719.8,199.6 724.0,201.6 729.0,203.0 734.0,201.0 740.0,198.0 746.0,198.3 753.5,198.8 761.0,196.6 768.4,195.0 773.0,196.6 778.0,199.0 785.0,201.6 791.4,203.6 797.0,202.5 802.0,201.0 807.0,200.2 811.3,199.6" fill="none" stroke="#f0202c" stroke-width="1.4" stroke-linejoin="round" stroke-linecap="round"/><rect x="432" y="330" width="379" height="13" fill="#fff"/><path d="M432 343 L432 341.3 L431.8 341.3 L433 333.1 L434.0 332.8 L437.9 332.3 L441.6 332.6 L445.5 332.2 L448.9 332.8 L451.8 332.0 L454.2 332.1 L456.4 332.1 L459.6 332.0 L463.1 332.7 L466.8 332.8 L469 332.90000000000003 L471.5 339.3 L473.5 341.3 L479.8 341.3 L481 333.1 L482.0 332.9 L485.9 332.6 L489.8 332.0 L492.0 332.0 L494.5 332.3 L497.4 332.6 L500.9 332.0 L501 332.90000000000003 L503.5 339.3 L505.5 341.3 L511.8 341.3 L513 333.1 L514.0 332.5 L516.8 332.0 L519.9 332.3 L523.3 332.4 L527.2 332.9 L529.4 332.7 L532.8 332.2 L533 332.90000000000003 L535.5 339.3 L537.5 341.3 L548.8 341.3 L550 333.1 L551.0 332.4 L553.7 332.7 L557.5 332.3 L560.1 332.4 L563.5 332.8 L566.7 332.2 L569.3 332.8 L572.4 332.0 L575.2 332.2 L578.6 332.0 L581.1 332.0 L584.1 333.0 L586.5 332.90000000000003 L589 339.3 L591 341.3 L598.3 341.3 L599.5 333.1 L600.5 332.3 L604.4 332.0 L607.1 332.8 L609.1 332.7 L611.8 331.9 L614.3 332.4 L617.1 332.5 L619 332.90000000000003 L621.5 339.3 L623.5 341.3 L628.8 341.3 L630 333.1 L631.0 332.1 L634.9 332.4 L637.9 332.0 L640.5 333.0 L643.8 332.5 L645.9 332.3 L649.5 332.4 L650 332.90000000000003 L652.5 339.3 L654.5 341.3 L666.3 341.3 L667.5 333.1 L668.5 332.9 L671.8 332.6 L673.9 331.9 L677.4 332.4 L681.1 332.8 L685.0 332.3 L689.0 332.7 L692.8 332.1 L696.3 332.4 L700.3 333.0 L702.7 332.4 L704 332.90000000000003 L706.5 339.3 L708.5 341.3 L715.8 341.3 L717 333.1 L718.0 332.4 L720.6 332.6 L722.8 332.1 L725.7 332.0 L728.5 332.9 L732.3 332.1 L734.3 332.8 L736.5 332.90000000000003 L739 339.3 L741 341.3 L746.8 341.3 L748 333.1 L749.0 332.6 L751.3 332.2 L755.1 332.9 L757.2 332.1 L760.0 332.2 L763.5 332.3 L767.1 332.1 L770.1 333.0 L771 332.90000000000003 L773.5 339.3 L775.5 341.3 L784.3 341.3 L785.5 333.1 L786.5 332.0 L788.7 332.6 L791.5 332.3 L794.4 332.5 L798.4 332.2 L801.5 332.2 L804.6 332.7 L806.9 332.4 L810 332.90000000000003 L812.5 339.3 L814.5 341.3 L811 341.3 L811 343Z" fill="#9fcdf0" stroke="#6f7f8c" stroke-width="0.6" stroke-linejoin="round"/><rect x="423.3" y="332" width="1.6" height="9" fill="#333"/><rect x="811.6" y="332" width="1.6" height="9" fill="#333"/><g fill="#333"><rect x="613.6" y="345.4" width="0.9" height="0.9"/><rect x="615.4" y="345.4" width="0.9" height="0.9"/><rect x="617.2" y="345.4" width="0.9" height="0.9"/></g></svg>
<span class="t" style="top:159.5px;font-size:5px;line-height:6px;color:#444;left:424.3px;">1600</span>
<span class="t" style="top:171.5px;font-size:5px;line-height:6px;color:#444;left:424.3px;">1550</span>
<span class="t" style="top:187.5px;font-size:5px;line-height:6px;color:#444;left:424.3px;">1500</span>
<span class="t" style="top:203.5px;font-size:5px;line-height:6px;color:#444;left:424.3px;">1450</span>
<span class="t" style="top:219.5px;font-size:5px;line-height:6px;color:#444;left:424.3px;">1400</span>
<span class="t" style="top:235.5px;font-size:5px;line-height:6px;color:#444;left:424.3px;">1350</span>
<span class="t" style="top:251.5px;font-size:5px;line-height:6px;color:#444;left:424.3px;">1300</span>
<span class="t" style="top:267.5px;font-size:5px;line-height:6px;color:#444;left:424.3px;">1250</span>
<span class="t" style="top:283.5px;font-size:5px;line-height:6px;color:#444;left:424.3px;">1200</span>
<span class="t" style="top:299.5px;font-size:5px;line-height:6px;color:#444;left:424.3px;">1150</span>
<span class="t" style="top:311.5px;font-size:5px;line-height:6px;color:#444;left:424.3px;">1100</span>
<span class="t" style="top:323.82px;font-size:4.8px;line-height:5.76px;color:#444;left:467px;transform:translateX(-50%);transform-origin:center center;">12:00:30:0</span>
<span class="t" style="top:323.82px;font-size:4.8px;line-height:5.76px;color:#444;left:529px;transform:translateX(-50%);transform-origin:center center;">12:00:40:0</span>
<span class="t" style="top:323.82px;font-size:4.8px;line-height:5.76px;color:#444;left:591px;transform:translateX(-50%);transform-origin:center center;">12:00:50:0</span>
<span class="t" style="top:323.82px;font-size:4.8px;line-height:5.76px;color:#444;left:654px;transform:translateX(-50%);transform-origin:center center;">12:01:00:0</span>
<span class="t" style="top:323.82px;font-size:4.8px;line-height:5.76px;color:#444;left:715.5px;transform:translateX(-50%);transform-origin:center center;">12:01:10:0</span>
<span class="t" style="top:323.82px;font-size:4.8px;line-height:5.76px;color:#444;left:777.5px;transform:translateX(-50%);transform-origin:center center;">12:01:20:0</span>
<svg style="left:816px;top:135px;width:8px;height:8px" viewBox="816 135 8 8"><path d="M821 136.7l-2.4 2.1l2.4 2.1" fill="none" stroke="#222" stroke-width="1.05"/></svg>
<span class="t" style="left:821.7px;top:144.6px;font-size:5.4px;line-height:5.6px;color:#4a4a40;transform:rotate(90deg);transform-origin:left top;">Data</span>
<svg style="left:420px;top:345px;width:420px;height:50px" viewBox="420 345 420 50"><rect x="425.5" y="348" width="372.5" height="41.69999999999999" fill="#fff"/><path d="M425.5 348H798" stroke="#d4d4d4" stroke-width="0.6"/><path d="M425.5 358.7H798" stroke="#d4d4d4" stroke-width="0.6"/><path d="M425.5 369H798" stroke="#d4d4d4" stroke-width="0.6"/><path d="M425.5 379.5H798" stroke="#d4d4d4" stroke-width="0.6"/><path d="M425.5 389.7H798" stroke="#d4d4d4" stroke-width="0.6"/><path d="M425.5 348V389.7" stroke="#d4d4d4" stroke-width="0.6"/><path d="M449.5 348V389.7" stroke="#d4d4d4" stroke-width="0.6"/><path d="M468 348V389.7" stroke="#d4d4d4" stroke-width="0.6"/><path d="M541.7 348V389.7" stroke="#d4d4d4" stroke-width="0.6"/><path d="M563 348V389.7" stroke="#d4d4d4" stroke-width="0.6"/><path d="M584.5 348V389.7" stroke="#d4d4d4" stroke-width="0.6"/><path d="M605.7 348V389.7" stroke="#d4d4d4" stroke-width="0.6"/><path d="M627 348V389.7" stroke="#d4d4d4" stroke-width="0.6"/><path d="M666.5 348V389.7" stroke="#d4d4d4" stroke-width="0.6"/><path d="M798 348V389.7" stroke="#d4d4d4" stroke-width="0.6"/><rect x="427.2" y="359.9" width="11" height="8" fill="#f4f4f4" stroke="#cfcfcf" stroke-width="0.4"/><rect x="438.6" y="359.9" width="8.6" height="8" fill="#e2e2e2" stroke="#cfcfcf" stroke-width="0.4"/><rect x="429.6" y="365.9" width="6" height="1.1" fill="#111"/><path d="M441.2 363h3.2l-1.6 2.2z" fill="#222"/><rect x="453.8" y="361.3" width="5.4" height="5.4" fill="#fff" stroke="#8a8a8a" stroke-width="0.5"/><path d="M455 363.9l1.2 1.3l2-2.6" fill="none" stroke="#8a8a8a" stroke-width="0.6"/><rect x="427.2" y="370.2" width="11" height="8" fill="#f4f4f4" stroke="#cfcfcf" stroke-width="0.4"/><rect x="438.6" y="370.2" width="8.6" height="8" fill="#e2e2e2" stroke="#cfcfcf" stroke-width="0.4"/><rect x="429.6" y="376.2" width="6" height="1.1" fill="#f0e000"/><path d="M441.2 373.3h3.2l-1.6 2.2z" fill="#222"/><rect x="453.8" y="371.6" width="5.4" height="5.4" fill="#fff" stroke="#8a8a8a" stroke-width="0.5"/><path d="M455 374.2l1.2 1.3l2-2.6" fill="none" stroke="#8a8a8a" stroke-width="0.6"/><rect x="427.2" y="380.7" width="11" height="8" fill="#f4f4f4" stroke="#cfcfcf" stroke-width="0.4"/><rect x="438.6" y="380.7" width="8.6" height="8" fill="#e2e2e2" stroke="#cfcfcf" stroke-width="0.4"/><rect x="429.6" y="386.7" width="6" height="1.1" fill="#e01010"/><path d="M441.2 383.8h3.2l-1.6 2.2z" fill="#222"/><rect x="453.8" y="382.1" width="5.4" height="5.4" fill="#fff" stroke="#8a8a8a" stroke-width="0.5"/><path d="M455 384.7l1.2 1.3l2-2.6" fill="none" stroke="#8a8a8a" stroke-width="0.6"/></svg>
<span class="t" style="top:351.06px;font-size:4.9px;line-height:5.88px;color:#222;font-weight:700;left:437.5px;transform:translateX(-50%);transform-origin:center center;">Color</span>
<span class="t" style="top:351.06px;font-size:4.9px;line-height:5.88px;color:#222;font-weight:700;left:458.8px;transform:translateX(-50%);transform-origin:center center;">Show</span>
<span class="t" style="top:351.06px;font-size:4.9px;line-height:5.88px;color:#222;font-weight:700;left:505px;transform:translateX(-50%);transform-origin:center center;">Trend Data</span>
<span class="t" style="top:351.06px;font-size:4.9px;line-height:5.88px;color:#222;font-weight:700;left:552.3px;transform:translateX(-50%);transform-origin:center center;">Max</span>
<span class="t" style="top:351.06px;font-size:4.9px;line-height:5.88px;color:#222;font-weight:700;left:573.7px;transform:translateX(-50%);transform-origin:center center;">Mean</span>
<span class="t" style="top:351.06px;font-size:4.9px;line-height:5.88px;color:#222;font-weight:700;left:595px;transform:translateX(-50%);transform-origin:center center;">Min</span>
<span class="t" style="top:351.06px;font-size:4.9px;line-height:5.88px;color:#222;font-weight:700;left:616.3px;transform:translateX(-50%);transform-origin:center center;">ROC</span>
<span class="t" style="top:351.06px;font-size:4.9px;line-height:5.88px;color:#222;font-weight:700;left:646.7px;transform:translateX(-50%);transform-origin:center center;">Display Period</span>
<span class="t" style="top:361.11px;font-size:5.4px;line-height:6.48px;color:#111;font-weight:700;left:432.6px;transform:translateX(-50%);transform-origin:center center;">A</span>
<span class="t" style="top:362.27px;font-size:4.8px;line-height:5.76px;color:#333;left:470px;">CAMSIM_ROI1Max</span>
<span class="t" style="top:362.27px;font-size:4.8px;line-height:5.76px;color:#333;left:543.8px;">1487</span>
<span class="t" style="top:362.27px;font-size:4.8px;line-height:5.76px;color:#333;left:565px;">1347,2</span>
<span class="t" style="top:362.27px;font-size:4.8px;line-height:5.76px;color:#333;left:586.5px;">1089,1</span>
<span class="t" style="top:362.27px;font-size:4.8px;line-height:5.76px;color:#333;left:607.7px;">5,8</span>
<span class="t" style="top:362.27px;font-size:4.8px;line-height:5.76px;color:#333;left:629px;">00:01:00</span>
<span class="t" style="top:371.51px;font-size:5.4px;line-height:6.48px;color:#111;font-weight:700;left:432.6px;transform:translateX(-50%);transform-origin:center center;">A</span>
<span class="t" style="top:372.67px;font-size:4.8px;line-height:5.76px;color:#333;left:470px;">Process_Peak1</span>
<span class="t" style="top:372.67px;font-size:4.8px;line-height:5.76px;color:#333;left:543.8px;">1487</span>
<span class="t" style="top:372.67px;font-size:4.8px;line-height:5.76px;color:#333;left:565px;">NaN</span>
<span class="t" style="top:372.67px;font-size:4.8px;line-height:5.76px;color:#333;left:586.5px;">1455,2</span>
<span class="t" style="top:372.67px;font-size:4.8px;line-height:5.76px;color:#333;left:607.7px;">0,3</span>
<span class="t" style="top:372.67px;font-size:4.8px;line-height:5.76px;color:#333;left:629px;">00:01:00</span>
<span class="t" style="top:381.86px;font-size:5.4px;line-height:6.48px;color:#111;font-weight:700;left:432.6px;transform:translateX(-50%);transform-origin:center center;">A</span>
<span class="t" style="top:383.02px;font-size:4.8px;line-height:5.76px;color:#333;left:470px;">Process_PeakAVG1</span>
<span class="t" style="top:383.02px;font-size:4.8px;line-height:5.76px;color:#333;left:543.8px;">1483,4</span>
<span class="t" style="top:383.02px;font-size:4.8px;line-height:5.76px;color:#333;left:565px;">NaN</span>
<span class="t" style="top:383.02px;font-size:4.8px;line-height:5.76px;color:#333;left:586.5px;">1459,2</span>
<span class="t" style="top:383.02px;font-size:4.8px;line-height:5.76px;color:#333;left:607.7px;">0,1</span>
<span class="t" style="top:383.02px;font-size:4.8px;line-height:5.76px;color:#333;left:629px;">00:01:00</span>
<svg style="left:426.5px;top:393.5px;width:6px;height:5px" viewBox="0 0 6 5"><path d="M1 1.3l1.9 1.9l1.9-1.9" fill="none" stroke="#222" stroke-width="0.9"/></svg>
<span class="t" style="top:393.3px;font-size:5px;line-height:6px;color:#222;left:435.3px;">Analysis</span>
<div style="left:801.2px;top:389.6px;width:8.9px;height:9.9px;background:#e8e8e8;border:0.5px solid #d4d4d4;"></div>
<svg style="left:800.7px;top:389.6px;width:10px;height:10px" viewBox="-5 -5 10 10"><path d="M0.82 1.83 L0.73 2.86 L-0.73 2.86 L-0.82 1.83 L-1.17 1.62 L-2.11 2.06 L-2.84 0.80 L-1.99 0.21 L-1.99 -0.21 L-2.84 -0.80 L-2.11 -2.06 L-1.17 -1.62 L-0.82 -1.83 L-0.73 -2.86 L0.73 -2.86 L0.82 -1.83 L1.17 -1.62 L2.11 -2.06 L2.84 -0.80 L1.99 -0.21 L1.99 0.21 L2.84 0.80 L2.11 2.06 L1.17 1.62Z M0.95 0 A0.95 0.95 0 1 0 -0.95 0 A0.95 0.95 0 1 0 0.95 0Z" fill="#2a2622" fill-rule="evenodd"/></svg>
<svg style="left:420px;top:448px;width:210px;height:56px" viewBox="420 448 210 56"><rect x="432" y="452" width="175.5" height="23.5" fill="#fbfbfb"/><rect x="447" y="452" width="29" height="23.5" fill="#000" opacity="0.045"/><rect x="505" y="452" width="29" height="23.5" fill="#000" opacity="0.045"/><rect x="562.5" y="452" width="28.5" height="23.5" fill="#000" opacity="0.045"/><path d="M432 454.6H607.5" stroke="#cfcfcf" stroke-width="0.5"/><path d="M432 457.9H607.5" stroke="#cfcfcf" stroke-width="0.5"/><path d="M432 461.2H607.5" stroke="#cfcfcf" stroke-width="0.5"/><path d="M432 464.5H607.5" stroke="#cfcfcf" stroke-width="0.5"/><path d="M432 467.8H607.5" stroke="#cfcfcf" stroke-width="0.5"/><path d="M432 471.1H607.5" stroke="#cfcfcf" stroke-width="0.5"/><path d="M432 474.4H607.5" stroke="#cfcfcf" stroke-width="0.5"/><path d="M447 452V477.5" stroke="#a8a8a8" stroke-width="0.5"/><path d="M476 452V477.5" stroke="#a8a8a8" stroke-width="0.5"/><path d="M505 452V477.5" stroke="#a8a8a8" stroke-width="0.5"/><path d="M534 452V477.5" stroke="#a8a8a8" stroke-width="0.5"/><path d="M562.5 452V477.5" stroke="#a8a8a8" stroke-width="0.5"/><path d="M591 452V477.5" stroke="#a8a8a8" stroke-width="0.5"/><path d="M432 475.5H607.5" stroke="#aaa" stroke-width="0.5"/><path d="M435.3 474.4H437.5V453.2H454V474.4H459V453.2H470V474.4H474V453.2H484V474.4H490V453.2H506V474.4H514V453.2H522V474.4H526V453.2H536V474.4H542V453.2H559V474.4H565V453.2H574V474.4H578V453.2H589V474.4H595V453.2H607.5" fill="none" stroke="#111" stroke-width="1.1"/><rect x="427" y="487" width="180.5" height="12.5" fill="#fff"/><rect x="427" y="487.3" width="18" height="12.2" fill="#9fcdf0"/><rect x="450.5" y="487.3" width="10.0" height="12.2" fill="#9fcdf0"/><rect x="465" y="487.3" width="12" height="12.2" fill="#9fcdf0"/><rect x="483" y="487.3" width="18" height="12.2" fill="#9fcdf0"/><rect x="506" y="487.3" width="11.5" height="12.2" fill="#9fcdf0"/><rect x="521" y="487.3" width="12.5" height="12.2" fill="#9fcdf0"/><rect x="539" y="487.3" width="18" height="12.2" fill="#9fcdf0"/><rect x="562" y="487.3" width="11" height="12.2" fill="#9fcdf0"/><rect x="577.5" y="487.3" width="10.5" height="12.2" fill="#9fcdf0"/><rect x="594" y="487.3" width="13.5" height="12.2" fill="#9fcdf0"/><path d="M427 487.3V499.5H607.5V487.3" fill="none" stroke="#8a9aa6" stroke-width="0.5"/><path d="M427 499.3H607.5" stroke="#6f8fa8" stroke-width="0.6"/><rect x="422.8" y="489" width="1.8" height="9" fill="#444"/><rect x="607.6" y="489" width="1.8" height="9" fill="#444"/></svg>
<span class="t" style="top:455px;font-size:5px;line-height:6px;color:#444;left:424px;">0,8</span>
<span class="t" style="top:469px;font-size:5px;line-height:6px;color:#444;left:424px;">0</span>
<span class="t" style="top:480.92px;font-size:4.8px;line-height:5.76px;color:#444;left:447px;transform:translateX(-50%);transform-origin:center center;">12:00:30:0</span>
<span class="t" style="top:480.92px;font-size:4.8px;line-height:5.76px;color:#444;left:476px;transform:translateX(-50%);transform-origin:center center;">12:00:40:0</span>
<span class="t" style="top:480.92px;font-size:4.8px;line-height:5.76px;color:#444;left:505px;transform:translateX(-50%);transform-origin:center center;">12:00:50:0</span>
<span class="t" style="top:480.92px;font-size:4.8px;line-height:5.76px;color:#444;left:534px;transform:translateX(-50%);transform-origin:center center;">12:01:00:0</span>
<span class="t" style="top:480.92px;font-size:4.8px;line-height:5.76px;color:#444;left:562.5px;transform:translateX(-50%);transform-origin:center center;">12:01:10:0</span>
<span class="t" style="top:480.92px;font-size:4.8px;line-height:5.76px;color:#444;left:591px;transform:translateX(-50%);transform-origin:center center;">12:01:20:0</span>
<svg style="left:612px;top:427px;width:8px;height:8px" viewBox="612 427 8 8"><path d="M617.1 429.4l-2.4 2.1l2.4 2.1" fill="none" stroke="#222" stroke-width="1.05"/></svg>
<span class="t" style="left:617.6px;top:438px;font-size:5.4px;line-height:5.6px;color:#4a4a40;transform:rotate(90deg);transform-origin:left top;">Data</span>
<svg style="left:426.5px;top:512.5px;width:6px;height:5px" viewBox="0 0 6 5"><path d="M1 3.4l1.9-1.9l1.9 1.9" fill="none" stroke="#222" stroke-width="0.9"/></svg>
<span class="t" style="top:512.2px;font-size:5px;line-height:6px;color:#222;left:435.3px;">Analysis</span>
<div style="left:597.7px;top:508.8px;width:8.6px;height:9.2px;background:#e6e6e6;border:0.5px solid #c8c8c8;"></div>
<svg style="left:597px;top:508.4px;width:10px;height:10px" viewBox="-5 -5 10 10"><path d="M0.82 1.83 L0.73 2.86 L-0.73 2.86 L-0.82 1.83 L-1.17 1.62 L-2.11 2.06 L-2.84 0.80 L-1.99 0.21 L-1.99 -0.21 L-2.84 -0.80 L-2.11 -2.06 L-1.17 -1.62 L-0.82 -1.83 L-0.73 -2.86 L0.73 -2.86 L0.82 -1.83 L1.17 -1.62 L2.11 -2.06 L2.84 -0.80 L1.99 -0.21 L1.99 0.21 L2.84 0.80 L2.11 2.06 L1.17 1.62Z M0.95 0 A0.95 0.95 0 1 0 -0.95 0 A0.95 0.95 0 1 0 0.95 0Z" fill="#2a2622" fill-rule="evenodd"/></svg>
<div style="left:634px;top:429px;width:195.3px;height:93.3px;background:#fff;border:0.8px solid #a9d3ee;border-radius:1.5px;"></div>
<span class="t" style="top:432.24px;font-size:19.6px;line-height:23.52px;color:#111;font-weight:700;left:725px;transform:translateX(-50%) scaleX(0.984);transform-origin:center center;">TAP TEMP</span>
<span class="t" style="top:472.3px;font-size:30px;line-height:36px;color:#111;left:725.5px;transform:translateX(-50%) scaleX(0.9);transform-origin:center center;">1479,8°C</span>
<div style="left:817.7px;top:510px;width:8.8px;height:9.6px;background:#e6e6e6;border:0.5px solid #c8c8c8;"></div>
<svg style="left:817.1px;top:509.8px;width:10px;height:10px" viewBox="-5 -5 10 10"><path d="M0.82 1.83 L0.73 2.86 L-0.73 2.86 L-0.82 1.83 L-1.17 1.62 L-2.11 2.06 L-2.84 0.80 L-1.99 0.21 L-1.99 -0.21 L-2.84 -0.80 L-2.11 -2.06 L-1.17 -1.62 L-0.82 -1.83 L-0.73 -2.86 L0.73 -2.86 L0.82 -1.83 L1.17 -1.62 L2.11 -2.06 L2.84 -0.80 L1.99 -0.21 L1.99 0.21 L2.84 0.80 L2.11 2.06 L1.17 1.62Z M0.95 0 A0.95 0.95 0 1 0 -0.95 0 A0.95 0.95 0 1 0 0.95 0Z" fill="#2a2622" fill-rule="evenodd"/></svg>
<svg style="left:5px;top:529px;width:110px;height:14px" viewBox="5 529 110 14"><g fill="#555"><rect x="7.2" y="532.6" width="0.9" height="0.9"/><rect x="7.2" y="534.6" width="0.9" height="0.9"/><rect x="7.2" y="536.6" width="0.9" height="0.9"/><rect x="7.2" y="538.6" width="0.9" height="0.9"/></g><rect x="13.6" y="530.4" width="22" height="11.3" fill="#ececec" stroke="#d4d4d4" stroke-width="0.5"/><path d="M25.8 531v10.4" stroke="#d8d8d8" stroke-width="0.5"/><rect x="15.6" y="534.4" width="7.2" height="3.5" rx="0.5" fill="#16c016" stroke="#1a3a1a" stroke-width="0.8"/><path d="M27.8 534.6h3.4l-1.7 2.6z" fill="#b4b4b4"/><path d="M37.4 531.5v9M50.7 531.5v9M65 531.5v9" stroke="#dcdcdc" stroke-width="0.5"/><g stroke="#222" stroke-width="0.9" fill="none"><rect x="41" y="533.4" width="6.6" height="5.6" rx="0.9"/><path d="M41 536.8h1.8l0.8 1.1h1.6l0.8-1.1h1.6" stroke-width="0.8"/><path d="M42.4 535h3.8" stroke-width="0.7"/><rect x="54.5" y="533.4" width="6.2" height="5.8" rx="0.8"/></g><rect x="55.9" y="534.8" width="3.4" height="3" rx="0.8" fill="#222"/><circle cx="71" cy="536.3" r="2.3" fill="#fff" stroke="#e81010" stroke-width="1.5"/><path d="M70 535.3l2 2M72 535.3l-2 2" stroke="#e81010" stroke-width="0.9"/><rect x="95.4" y="530.2" width="10.7" height="12" fill="#2fd02f"/></svg>
<span class="t" style="top:533.5px;font-size:5px;line-height:6px;color:#333;left:75.8px;">0 Error</span>
<span class="t" style="top:533.42px;font-size:4.8px;line-height:5.76px;color:#0a4a0a;left:100.8px;transform:translateX(-50%);transform-origin:center center;">OPC</span>
<div style="left:795px;top:531px;width:36.5px;height:10.3px;background:#fafafa;border:0.5px solid #d8d8d8;"></div>
<div style="left:813.3px;top:531px;width:0.5px;height:10.3px;background:#d8d8d8;"></div>
<svg style="left:795px;top:531px;width:37px;height:11px" viewBox="795 531 37 11"><g fill="#22cc33"><path d="M798.6 536.2l1.5-2l1.5 2h-0.9v2.2h-1.2v-2.2z"/><path d="M817.5 536.2l1.5-2l1.5 2h-0.9v2.2h-1.2v-2.2z"/></g><g fill="#111"><path d="M807 536.4l1.5 2l1.5-2h-0.9v-2.2h-1.2v2.2z"/><path d="M825.6 536.4l1.5 2l1.5-2h-0.9v-2.2h-1.2v2.2z"/></g></svg>
</div></body></html>
